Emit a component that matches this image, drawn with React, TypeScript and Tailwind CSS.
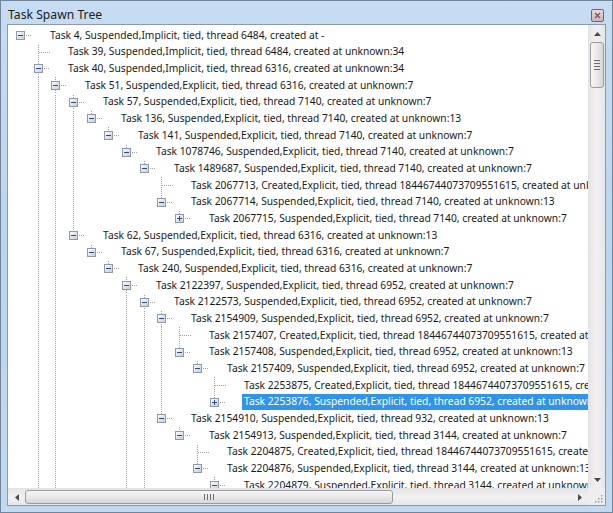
type Row = [number, 'm' | 'p' | 'l', string, boolean?, boolean?];

// level, expander (minus / plus / leaf), label, has siblings below the view, selected
const rows: Row[] = [
  [0, 'm', 'Task 4, Suspended,Implicit, tied, thread 6484, created at -'],
  [1, 'l', 'Task 39, Suspended,Implicit, tied, thread 6484, created at unknown:34'],
  [1, 'm', 'Task 40, Suspended,Implicit, tied, thread 6316, created at unknown:34', true],
  [2, 'm', 'Task 51, Suspended,Explicit, tied, thread 6316, created at unknown:7', true],
  [3, 'm', 'Task 57, Suspended,Explicit, tied, thread 7140, created at unknown:7'],
  [4, 'm', 'Task 136, Suspended,Explicit, tied, thread 7140, created at unknown:13'],
  [5, 'm', 'Task 141, Suspended,Explicit, tied, thread 7140, created at unknown:7'],
  [6, 'm', 'Task 1078746, Suspended,Explicit, tied, thread 7140, created at unknown:7'],
  [7, 'm', 'Task 1489687, Suspended,Explicit, tied, thread 7140, created at unknown:7'],
  [8, 'l', 'Task 2067713, Created,Explicit, tied, thread 18446744073709551615, created at unknown:7'],
  [8, 'm', 'Task 2067714, Suspended,Explicit, tied, thread 7140, created at unknown:13'],
  [9, 'p', 'Task 2067715, Suspended,Explicit, tied, thread 7140, created at unknown:7'],
  [3, 'm', 'Task 62, Suspended,Explicit, tied, thread 6316, created at unknown:13'],
  [4, 'm', 'Task 67, Suspended,Explicit, tied, thread 6316, created at unknown:7'],
  [5, 'm', 'Task 240, Suspended,Explicit, tied, thread 6316, created at unknown:7'],
  [6, 'm', 'Task 2122397, Suspended,Explicit, tied, thread 6952, created at unknown:7', true],
  [7, 'm', 'Task 2122573, Suspended,Explicit, tied, thread 6952, created at unknown:7', true],
  [8, 'm', 'Task 2154909, Suspended,Explicit, tied, thread 6952, created at unknown:7'],
  [9, 'l', 'Task 2157407, Created,Explicit, tied, thread 18446744073709551615, created at unknown:7'],
  [9, 'm', 'Task 2157408, Suspended,Explicit, tied, thread 6952, created at unknown:13'],
  [10, 'm', 'Task 2157409, Suspended,Explicit, tied, thread 6952, created at unknown:7'],
  [11, 'l', 'Task 2253875, Created,Explicit, tied, thread 18446744073709551615, created at unknown:7'],
  [11, 'p', 'Task 2253876, Suspended,Explicit, tied, thread 6952, created at unknown:7', false, true],
  [8, 'm', 'Task 2154910, Suspended,Explicit, tied, thread 932, created at unknown:13'],
  [9, 'm', 'Task 2154913, Suspended,Explicit, tied, thread 3144, created at unknown:7'],
  [10, 'l', 'Task 2204875, Created,Explicit, tied, thread 18446744073709551615, created at unknown:7'],
  [10, 'm', 'Task 2204876, Suspended,Explicit, tied, thread 3144, created at unknown:13'],
  [11, 'm', 'Task 2204879, Suspended,Explicit, tied, thread 3144, created at unknown:7'],
];

const LINE = '#a3a3a3';

const cx = (level: number) => Math.round(20 + 17.65 * level) - 8;
const top = (i: number) => Math.round((i * 50) / 3);

const hasNext = (i: number) => {
  const lv = rows[i][0];
  for (let j = i + 1; j < rows.length; j++) {
    if (rows[j][0] < lv) return false;
    if (rows[j][0] === lv) return true;
  }
  return !!rows[i][3];
};

const ancestor = (i: number, lv: number) => {
  for (let j = i - 1; j >= 0; j--) if (rows[j][0] === lv) return j;
  return -1;
};

const Dots = ({ x1, y1, x2, y2, off }: any) => (
  <line
    x1={x1}
    y1={y1}
    x2={x2}
    y2={y2}
    stroke={LINE}
    strokeWidth={1}
    strokeDasharray="1 1"
    strokeDashoffset={off}
  />
);

const TreeRow = ({ i }: { i: number }) => {
  const [lv, kind, label, , sel] = rows[i];
  const h = top(i + 1) - top(i);
  const cy = Math.floor(h / 2);
  const c = cx(lv);
  const w = c + 28;
  const off = top(i) % 2;
  const box = kind !== 'l';

  const guides = [];
  for (let l = 0; l < lv; l++) {
    const a = ancestor(i, l);
    if (a >= 0 && hasNext(a)) {
      const x = cx(l) + 0.5;
      guides.push(<Dots key={l} x1={x} y1={0} x2={x} y2={h} off={off} />);
    }
  }

  return (
    <div className="flex items-center" style={{ height: h }}>
      <svg width={w} height={h} className="shrink-0">
        {guides}
        {lv > 0 && <Dots x1={c + 0.5} y1={0} x2={c + 0.5} y2={box ? cy - 4 : cy} off={off} />}
        {hasNext(i) && <Dots x1={c + 0.5} y1={box ? cy + 5 : cy} x2={c + 0.5} y2={h} off={off} />}
        {box ? (
          <Dots x1={c + 6} y1={cy + 0.5} x2={c + 11} y2={cy + 0.5} off={0} />
        ) : (
          <Dots x1={c + 1} y1={cy + 0.5} x2={c + 12} y2={cy + 0.5} off={0} />
        )}
        {box && (
          <g>
            <defs>
              <linearGradient id={`bx${i}`} x1="0" y1="0" x2="1" y2="1">
                <stop offset="0" stopColor="#ffffff" />
                <stop offset="1" stopColor="#c3ccd8" />
              </linearGradient>
            </defs>
            <rect
              x={c - 4 + 0.5}
              y={cy - 4 + 0.5}
              width={8}
              height={8}
              fill={`url(#bx${i})`}
              stroke="#8f9aa7"
              strokeWidth={1}
            />
            <line x1={c - 2} y1={cy + 0.5} x2={c + 3} y2={cy + 0.5} stroke="#2b4a86" strokeWidth={1} />
            {kind === 'p' && (
              <line x1={c + 0.5} y1={cy - 2} x2={c + 0.5} y2={cy + 3} stroke="#2b4a86" strokeWidth={1} />
            )}
          </g>
        )}
      </svg>
      <span
        className={`flex h-full shrink-0 items-center whitespace-nowrap px-[2px] ${
          sel ? 'bg-[#2f94ea] text-white' : 'text-[#1a1a1a]'
        }`}
      >
        {label}
      </span>
    </div>
  );
};

const Arrow = ({ dir }: { dir: 'up' | 'down' | 'left' | 'right' }) => {
  const pts = {
    up: '0,4 3.5,0 7,4',
    down: '0,0 3.5,4 7,0',
    left: '4,0 0,3.5 4,7',
    right: '0,0 4,3.5 0,7',
  }[dir];
  const vert = dir === 'up' || dir === 'down';
  return (
    <svg width={vert ? 7 : 4} height={vert ? 4 : 7}>
      <polygon points={pts} fill="#4a4a4a" />
    </svg>
  );
};

export default function App() {
  return (
    <div className="flex h-[513px] w-[613px] flex-col border border-[#71859b] bg-gradient-to-b from-[#c6dcf2] via-[#bcd4ed] to-[#c2d9f0] px-[6px] pb-[6px] font-['Noto_Sans',sans-serif]">
      {/* title bar */}
      <div className="flex h-[23px] shrink-0 items-center justify-between pt-[6px] pl-[1px] pr-[2px]">
        <span className="text-[12.2px] text-[#1b1b1b]">Task Spawn Tree</span>
        <div className="flex h-[13px] w-[13px] items-center justify-center rounded-[2px] border border-[#a4514a] bg-gradient-to-b from-[#eadcdc] to-[#c9b4b4]">
          <svg width="7" height="7">
            <path d="M1 1 L6 6 M6 1 L1 6" stroke="#6e6060" strokeWidth="1.4" />
          </svg>
        </div>
      </div>

      {/* tree panel */}
      <div className="flex min-h-0 flex-1 flex-col border border-[#8e99a6] bg-white">
        <div className="flex min-h-0 flex-1">
          <div className="min-w-0 flex-1 overflow-hidden pt-[2px] text-[10.25px]">
            {rows.map((_, i) => (
              <TreeRow key={i} i={i} />
            ))}
          </div>

          {/* vertical scrollbar */}
          <div className="flex w-[17px] shrink-0 flex-col border-l border-[#e3e3e3] bg-gradient-to-r from-[#e6e6e9] via-[#f1f1f3] to-[#e6e6e9]">
            <div className="flex h-[17px] items-center justify-center">
              <Arrow dir="up" />
            </div>
            <div className="flex flex-1 flex-col px-[1px]">
              <div className="flex h-[46px] flex-col items-center justify-center gap-[2px] rounded-[3px] border border-[#9c9ca0] bg-gradient-to-r from-[#f6f6f6] via-[#e9e9ea] to-[#d6d6d9]">
                <div className="h-[1px] w-[6px] bg-[#6e6e72]" />
                <div className="h-[1px] w-[6px] bg-[#6e6e72]" />
                <div className="h-[1px] w-[6px] bg-[#6e6e72]" />
                <div className="h-[1px] w-[6px] bg-[#6e6e72]" />
              </div>
            </div>
            <div className="flex h-[17px] items-center justify-center">
              <Arrow dir="down" />
            </div>
          </div>
        </div>

        {/* horizontal scrollbar */}
        <div className="flex h-[17px] shrink-0">
          <div className="flex flex-1 border-t border-[#e3e3e3] bg-gradient-to-b from-[#e6e6e9] via-[#f1f1f3] to-[#e6e6e9]">
            <div className="flex w-[17px] items-center justify-center">
              <Arrow dir="left" />
            </div>
            <div className="flex flex-1 py-[1px]">
              <div className="flex w-[368px] items-center justify-center gap-[2px] rounded-[3px] border border-[#9c9ca0] bg-gradient-to-b from-[#f6f6f6] via-[#e9e9ea] to-[#d6d6d9]">
                <div className="h-[6px] w-[1px] bg-[#6e6e72]" />
                <div className="h-[6px] w-[1px] bg-[#6e6e72]" />
                <div className="h-[6px] w-[1px] bg-[#6e6e72]" />
                <div className="h-[6px] w-[1px] bg-[#6e6e72]" />
              </div>
            </div>
            <div className="flex w-[17px] items-center justify-center">
              <Arrow dir="right" />
            </div>
          </div>
          <div className="flex w-[17px] items-end justify-end bg-[#eeeef0] p-[2px]">
            <svg width="9" height="9">
              {[
                [7, 1],
                [4, 4],
                [7, 4],
                [1, 7],
                [4, 7],
                [7, 7],
              ].map(([x, y], k) => (
                <rect key={k} x={x} y={y} width="1.5" height="1.5" fill="#9a9a9e" />
              ))}
            </svg>
          </div>
        </div>
      </div>
    </div>
  );
}
